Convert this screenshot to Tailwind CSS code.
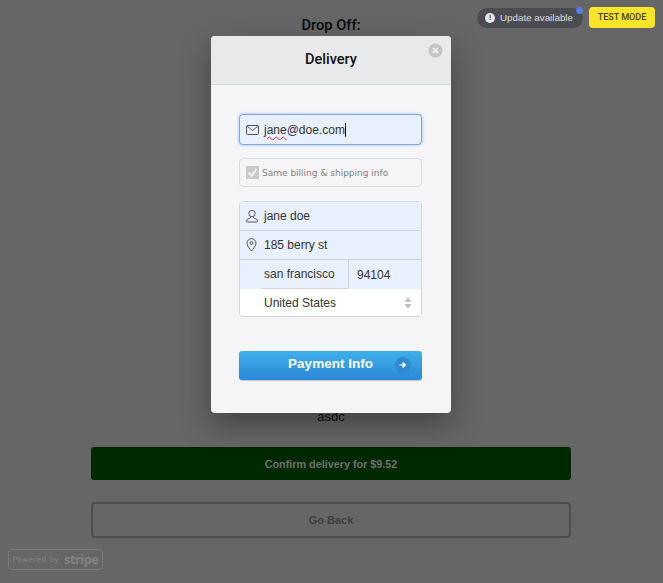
<!DOCTYPE html>
<html>
<head>
<meta charset="utf-8">
<script src="https://cdn.jsdelivr.net/npm/@tailwindcss/browser@4"></script>
</head>
<body class="m-0 bg-[#666666] font-['Liberation_Sans',Arial,sans-serif]">
<div class="relative h-[583px] w-[663px] overflow-hidden bg-[#666666]">
  <div class="flex flex-col items-center pr-[1px]">
    <div class="mt-[16px] h-[17px] text-[14.7px] leading-[18px] font-medium text-[#0a0a0a] font-['Roboto',sans-serif]">Drop Off:</div>
    <div class="mt-[376px] h-[16px] text-[13px] leading-[16px] text-[#111]">asdc</div>
    <div class="mt-[22px] flex h-[33px] w-[480px] items-center justify-center rounded-[3px] bg-[#002900] pt-[2px] text-[10.8px] font-bold text-[#6f6f6f]">Confirm delivery for $9.52</div>
    <div class="mt-[22px] flex h-[36px] w-[480px] items-center justify-center rounded-[4px] border-2 border-[#4d4d4d] text-[11px] font-bold text-[#3f3f3f]">Go Back</div>
  </div>

  <div class="absolute top-[8px] right-[80px] flex h-[20px] w-[106px] items-center gap-[5px] rounded-full bg-[#4b4c52] pl-[8px] text-[9.8px] font-normal whitespace-nowrap text-[#dcdcde]">
    <span class="flex h-[10px] w-[10px] items-center justify-center rounded-full bg-[#e8e8e8] text-[8px] leading-none font-bold text-[#4b4c52]">!</span>
    Update available
    <span class="absolute top-[-1px] right-0 h-[7px] w-[7px] rounded-full bg-[#5b7be0]"></span>
  </div>
  <div class="absolute top-[7px] right-[8px] flex h-[21px] w-[66px] items-center justify-center rounded-[4px] bg-[#f9e42c] text-[9px] font-medium text-[#4a4510] font-['Roboto',sans-serif]">TEST MODE</div>

  <div class="absolute bottom-[13px] left-[8px] flex h-[21px] w-[95px] items-center justify-center gap-[5px] rounded-[4px] border border-[#7a7a7a] text-[#838383]">
    <span class="font-['DejaVu_Sans',sans-serif] text-[7.5px] tracking-[0.3px]">Powered by</span>
    <span class="font-['Open_Sans',sans-serif] text-[13px] leading-none font-bold tracking-[-0.6px]">stripe</span>
  </div>

  <div class="absolute top-[36px] left-[211px] h-[377px] w-[240px] overflow-hidden rounded-[4px] bg-[#f5f5f7] shadow-[0_12px_30px_rgba(0,0,0,0.35)]">
    <div class="relative flex h-[49px] items-center justify-center border-b border-[#d6d6d8] bg-[#e8e9eb] text-[14.5px] text-[#111] font-['Roboto',sans-serif]">
      <span class="font-medium">Delivery</span>
      <svg class="absolute top-[7px] right-[8px]" width="15" height="15" viewBox="0 0 15 15"><circle cx="7.500" cy="7.500" r="7" fill="#c4c5c8"/><path d="M5 5l5 5M10 5l-5 5" stroke="#eeeeef" stroke-width="2"/></svg>
    </div>
    <div class="flex flex-col pt-[29px] pr-[29px] pl-[28px]">
      <div class="flex h-[31px] items-center rounded-[4px] border border-[#7fa9e0] bg-[#e8f0fe] pl-[6px] shadow-[0_0_3px_rgba(90,150,230,0.7)]">
        <svg width="13" height="10" viewBox="0 0 13 10" fill="none" stroke="#555" stroke-width="1"><rect x="0.500" y="0.500" width="12" height="9" rx="1"/><path d="M1 1l5.500 4.500L12 1"/></svg>
        <span class="ml-[5px] text-[12px] text-[#333] underline decoration-wavy decoration-[#e03030] decoration-[0.5px] underline-offset-2">jane</span><span class="text-[12px] text-[#333]">@doe.com</span><span class="h-[14px] w-px bg-black"></span>
      </div>
      <div class="mt-[13px] flex h-[29px] items-center rounded-[4px] border border-[#dcdcde] pl-[6px]">
        <svg width="13" height="13" viewBox="0 0 13 13"><rect width="13" height="13" rx="1" fill="#c9c9cb"/><path d="M2.500 6.500l3 3.500 5-7" fill="none" stroke="#f2f2f2" stroke-width="2"/></svg>
        <span class="mt-[2px] ml-[3px] font-['DejaVu_Sans',sans-serif] text-[9px] text-[#808080]">Same billing &amp; shipping info</span>
      </div>
      <div class="mt-[14px] overflow-hidden rounded-[4px] border border-[#d4d5d8] text-[12px] text-[#333]">
        <div class="flex h-[29px] items-center border-b border-[#d4d5d8] bg-[#e8f0fe] pl-[5px]">
          <svg width="14" height="14" viewBox="0 0 14 14" fill="none" stroke="#555" stroke-width="1"><circle cx="7" cy="4.500" r="3.200"/><path d="M5.500 7.500v1.200L2 10.500c-1 .6-.8 2.500.5 2.500h9c1.300 0 1.500-1.900.5-2.500L8.500 8.700V7.500"/></svg>
          <span class="ml-[5px]">jane doe</span>
        </div>
        <div class="flex h-[29px] items-center border-b border-[#d4d5d8] bg-[#e8f0fe] pl-[6px]">
          <svg width="11" height="14" viewBox="0 0 11 14" fill="none" stroke="#555" stroke-width="1"><path d="M5.500 13C3.500 10.500 1 8 1 5.200a4.500 4.500 0 0 1 9 0C10 8 7.500 10.500 5.500 13z"/><circle cx="5.500" cy="5" r="1.500"/></svg>
          <span class="ml-[7px]">185 berry st</span>
        </div>
        <div class="flex h-[29px] bg-[#e8f0fe]">
          <div class="w-[22px] shrink-0"></div>
          <div class="flex w-[87px] items-center border-r border-b border-[#d4d5d8] pl-[2px]">san francisco</div>
          <div class="flex flex-1 items-center pl-[8px]">94104</div>
        </div>
        <div class="relative flex h-[27px] items-center bg-white pl-[24px]">
          United States
          <svg class="absolute right-[9px] top-[8px]" width="8" height="12" viewBox="0 0 8 12" fill="#bfc0c4"><path d="M4 0l3.500 5H.5zM4 12L.5 7h7z"/></svg>
        </div>
      </div>
      <div class="relative mt-[34px] flex h-[29px] items-center justify-center rounded-[3px] bg-gradient-to-b from-[#3fb0ea] to-[#2c88d8] pb-[2px] text-[13.5px] font-bold text-white shadow-[0_1px_1px_rgba(0,0,0,0.2)]">
        Payment Info
        <span class="absolute top-[6px] right-[11px] flex h-[16px] w-[16px] items-center justify-center rounded-full bg-[#2f8ad0]">
          <svg width="8" height="8" viewBox="0 0 8 8"><path d="M0.500 4H5M4 1.500L7 4 4 6.500z" fill="#fff" stroke="#fff" stroke-width="1"/></svg>
        </span>
      </div>
    </div>
  </div>
</div>
</body>
</html>
